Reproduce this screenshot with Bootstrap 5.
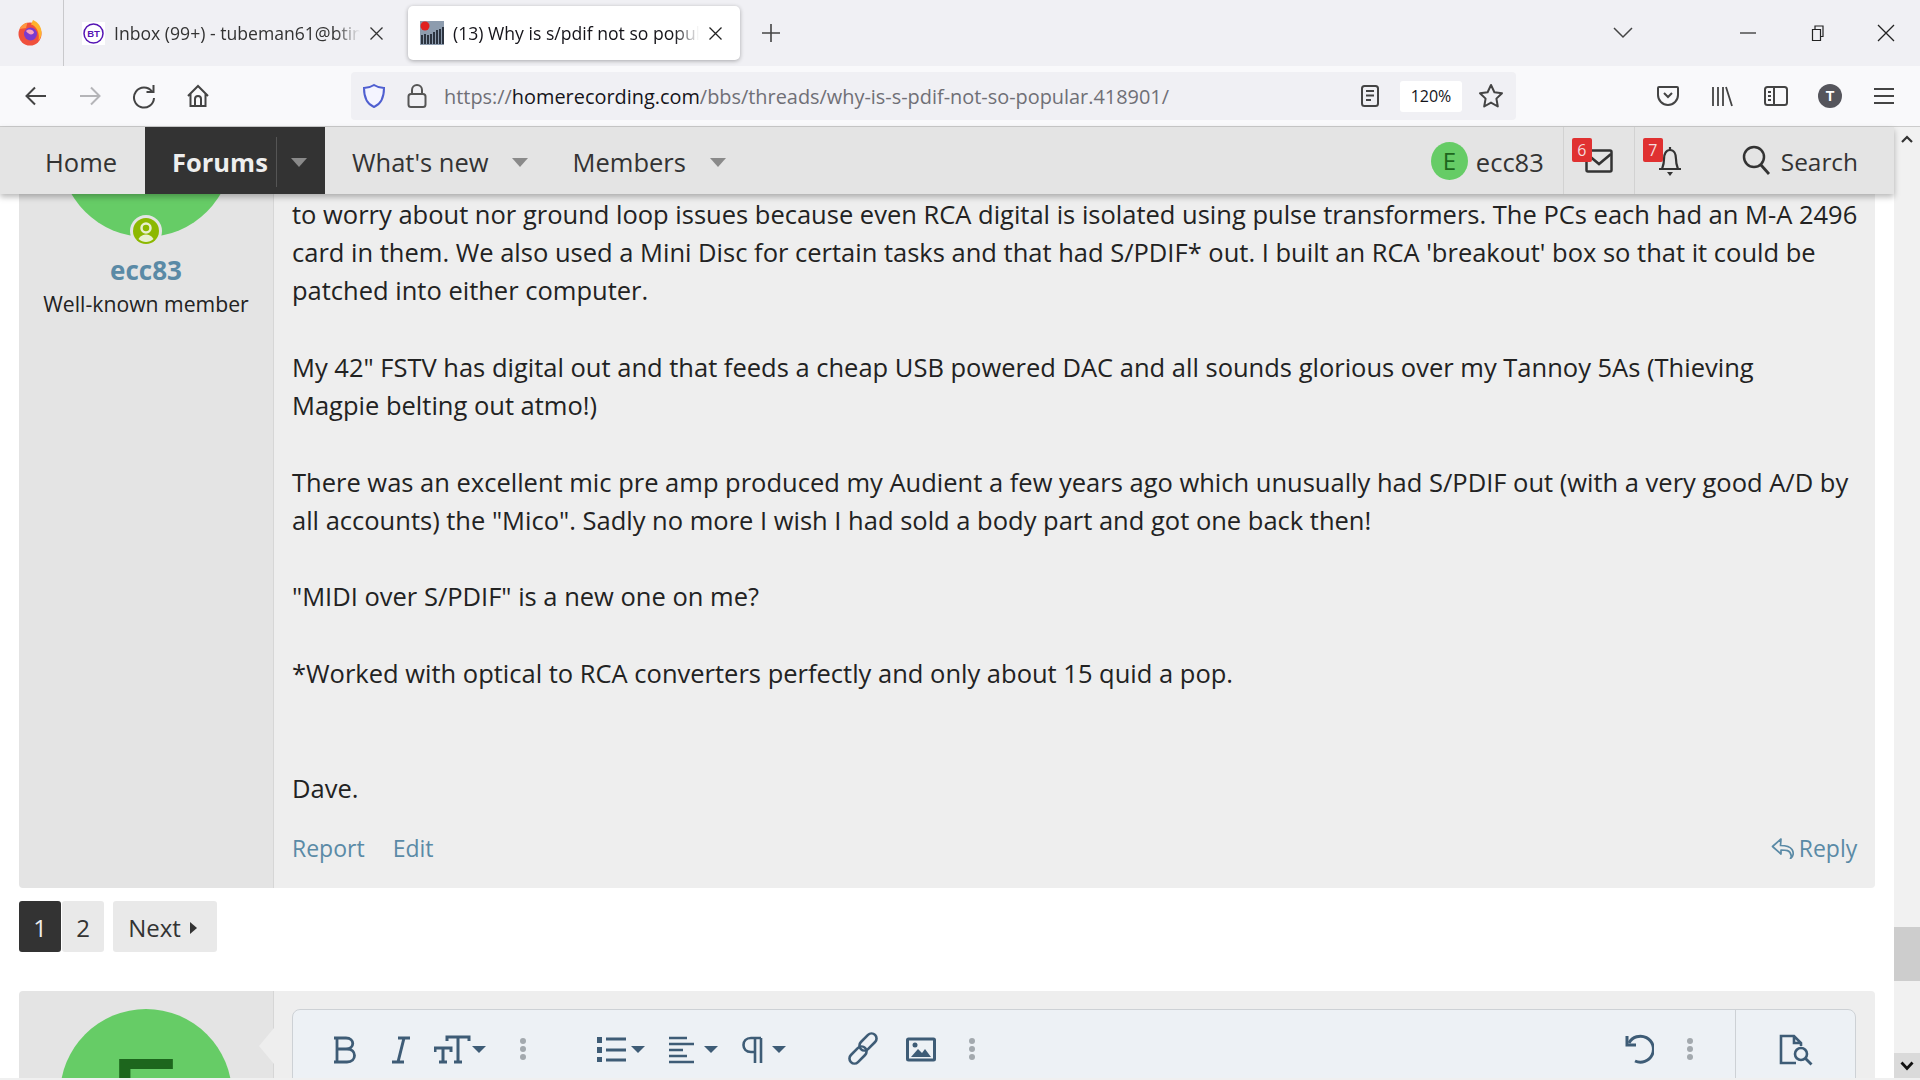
<!DOCTYPE html>
<html lang="en">
<head>
    <meta charset="UTF-8">
    <title>(13) Why is s/pdif not so popular</title>
    <link rel="stylesheet" href="https://cdn.jsdelivr.net/npm/bootstrap@5.3.0/dist/css/bootstrap.min.css">
    <style>
        html, body { height: 1080px; overflow: hidden; }
        body { font-family: "Open Sans", "Noto Sans", sans-serif; background: #fff; color: #222; }

        /* Browser chrome */
        .tabstrip { height: 66px; background: #f0f0f4; }
        .fx-cell { width: 64px; height: 66px; border-right: 1px solid #c9c9cc; padding-right: 4px; }
        .tabitem { width: 332px; height: 54px; margin-top: 6px; padding: 0 12px 0 18px; font-size: 17.6px; color: #333; gap: 9px; }
        .tabitem.tab-on { margin-left: 12px; background: #fff; border-radius: 5px; box-shadow: 0 1px 4px rgba(0,0,0,.3); padding-left: 12px; padding-right: 17px; color: #15141a; }
        .tabtitle { flex: 1; white-space: nowrap; overflow: hidden; -webkit-mask-image: linear-gradient(90deg, #000 90%, transparent); mask-image: linear-gradient(90deg, #000 90%, transparent); }
        .toolrow { height: 61px; background: #f9f9fb; border-bottom: 1px solid #ccc; padding-left: 9px; }
        .tb-btn { width: 54px; height: 48px; flex: none; }
        .urlbar { width: 1165px; height: 48px; margin-left: 126px; background: #f0f0f4; border-radius: 4px; }
        .urltext { font-size: 19.9px; color: #6f6f76; white-space: nowrap; margin-left: 17px; width: 909px; padding-top: 2px; }
        .urltext b { font-weight: 400; color: #15141a; }
        .zoombox { width: 62px; height: 31px; background: #fff; border-radius: 3px; font-size: 16px; color: #15141a; margin-left: 21px; }

        /* Forum nav */
        .mainwrap { height: 951px; }
        .pagecol { width: 1894px; }
        .forumnav { height: 67px; background: #e4e4e4; box-shadow: 0 3px 6px rgba(0,0,0,.28); position: relative; z-index: 2; font-size: 25.5px; color: #333; }
        .navlink { height: 67px; padding-left: 27px; padding-top: 3px; }
        .navlink.nav-on { background: #333; color: #eee; font-weight: 700; width: 180px; padding-top: 3px; }
        .caret-dn { width: 0; height: 0; border: 8px solid transparent; border-top: 9px solid #8a8a8a; border-bottom: 0; }
        .navsep { width: 1px; height: 67px; background: #d2d2d2; }
        .nav-on .navsep { height: 50px; background: #555; margin-left: 8px; margin-right: 14px; }
        .useravatar { width: 37px; height: 38px; border-radius: 50%; background: #66cc66; color: #1d661d; font-size: 24px; }
        .iconcell { width: 70px; height: 67px; position: relative; }
        .redcount { position: absolute; top: 11px; left: 8px; width: 20px; height: 24px; background: #e03131; color: #f5dddd; font-size: 16px; line-height: 24px; text-align: center; border-radius: 2px; }
        .searchlabel { font-size: 24.4px; margin-left: 10px; padding-top: 4px; }

        /* Posts */
        .pagebody { padding: 0 19px; height: 884px; overflow: hidden; }
        .postbox { display: flex; border-radius: 4px; overflow: hidden; }
        .usercell { width: 255px; flex: none; background: #e4e4e4; border-right: 1px solid #d6d6d6; position: relative; text-align: center; overflow: hidden; }
        .msgcell { flex: 1; background: #eee; position: relative; padding: 1px 19px 0 18px; }
        .avatarbig { width: 172px; height: 172px; border-radius: 50%; background: #66cc66; color: #1d661d; margin: 0 auto; font-size: 135px; line-height: 190px; padding-right: 5px; }
        .statusdot { position: absolute; left: 111px; top: 21px; width: 32px; height: 32px; border-radius: 50%; background: #e4e4e4; }
        .uname { font-size: 26px; font-weight: 700; color: #5a8aa6; line-height: 32px; margin-top: 17px; }
        .utitle { font-size: 21.2px; line-height: 36px; color: #222; }
        .posttext { font-size: 25.5px; line-height: 38.24px; white-space: nowrap; color: #222; }
        .postlinks { height: 38px; margin-top: 22px; font-size: 23px; color: #5a8aa6; }
        .pagerow { margin: 13px 0 39px; height: 51px; font-size: 24px; }
        .pgnum { width: 42px; background: #e9e9e9; border-radius: 3px; margin-right: 1px; color: #333; padding-top: 2px; }
        .pgnum.pg-on { background: #333; color: #eee; }
        .pgnext { width: 104px; margin-left: 8px; padding: 2px 5px 0 0; background: #e9e9e9; border-radius: 3px; color: #333; gap: 9px; }
        .arrow-r { width: 0; height: 0; border: 6px solid transparent; border-left: 7px solid #333; border-right: 0; }
        .editorbox { margin-top: 18px; height: 100px; background: #edf1f5; border: 1px solid #cdd1d5; border-radius: 8px 8px 0 0; }
        .edbar { height: 78px; position: relative; }
        .edbtn { position: absolute; top: 0; height: 78px; }
        .edsep { position: absolute; top: 0; left: 1442px; width: 1px; height: 100px; background: #cdd1d5; }
        .tail-left { position: absolute; left: -15px; top: 37px; width: 0; height: 0; border: 18px solid transparent; border-right: 15px solid #eee; border-left: 0; }

        /* Scrollbar */
        .scrolltrack { width: 26px; background: #f1f1f1; position: relative; }
        .scrollthumb { position: absolute; top: 800px; left: 0; width: 26px; height: 54px; background: #cdcdcd; }
        .scrollend { position: absolute; bottom: 0; left: 0; width: 26px; height: 25px; background: #dadada; }
        .bottomstrip { height: 2px; background: #f0f0f0; }
    </style>
</head>
<body>

    <!-- Tab strip -->
    <div class="tabstrip d-flex">
        <div class="fx-cell d-flex align-items-center justify-content-center">
            <svg width="26" height="28" viewBox="0 0 26 28"><circle cx="13" cy="15" r="11.500" fill="#f0503c"/><path d="M16 1c5 2 9 7 8.500 13.500-.3 3-1.500 5.500-3 7C23 15 20 7 14 5.500z" fill="#ffb32c"/><path d="M2.500 10c1.500-3.500 4.500-6 8-6.500L9 9z" fill="#ff9640"/><circle cx="13.500" cy="15" r="6.500" fill="#7a3bd0"/><path d="M9 12c3-2.500 7-1.500 8 1.500-1 2.500-5 3-8-1.500z" fill="#f9a0c0"/></svg>
        </div>
        <div class="tabitem d-flex align-items-center">
            <svg width="23" height="23" viewBox="0 0 23 23"><rect width="23" height="23" fill="#fff"/><circle cx="11.500" cy="11.500" r="9.500" fill="none" stroke="#5514b4" stroke-width="1.500"/><text x="11.500" y="15" font-size="9.500" font-weight="700" text-anchor="middle" fill="#5514b4" font-family="Liberation Sans">BT</text></svg>
            <span class="tabtitle">Inbox (99+) - tubeman61@btinternet.com</span>
            <svg width="15" height="15" viewBox="0 0 15 15"><path d="M1.500 1.500l12 12M13.500 1.500l-12 12" stroke="#333" stroke-width="1.300"/></svg>
        </div>
        <div class="tabitem tab-on d-flex align-items-center">
            <svg width="24" height="24" viewBox="0 0 24 24"><rect width="24" height="24" fill="#8d9cae"/><path d="M2 23v-9M5 23v-10M8 23v-9M11 23v-10M14 23v-12M17 23v-14M20 23v-15M23 23v-17" stroke="#2c3440" stroke-width="2"/><circle cx="5" cy="5" r="4.500" fill="#e02020"/></svg>
            <span class="tabtitle">(13) Why is s/pdif not so popular</span>
            <svg width="15" height="15" viewBox="0 0 15 15"><path d="M1.500 1.500l12 12M13.500 1.500l-12 12" stroke="#222" stroke-width="1.300"/></svg>
        </div>
        <div class="d-flex align-items-center justify-content-center" style="width:62px">
            <svg width="20" height="20" viewBox="0 0 20 20"><path d="M10 1v18M1 10h18" stroke="#444" stroke-width="1.600"/></svg>
        </div>
        <div class="flex-grow-1 d-flex align-items-center">
            <svg class="ms-auto" width="20" height="12" viewBox="0 0 20 12"><path d="M1 1l9 9 9-9" fill="none" stroke="#444" stroke-width="1.500"/></svg>
            <svg style="margin-left:107px" width="16" height="2" viewBox="0 0 16 2"><path d="M0 1h16" stroke="#333" stroke-width="1.300"/></svg>
            <svg style="margin-left:53px" width="16" height="16" viewBox="0 0 16 16"><path d="M3.500 4.500h8v11h-8zM6 4.500V1h8v10.500h-2.500" fill="none" stroke="#222" stroke-width="1.200"/></svg>
            <svg style="margin-left:52px;margin-right:25px" width="18" height="18" viewBox="0 0 18 18"><path d="M1 1l16 16M17 1L1 17" stroke="#222" stroke-width="1.300"/></svg>
        </div>
    </div>

    <!-- Toolbar -->
    <div class="toolrow d-flex align-items-center">
        <div class="tb-btn d-flex align-items-center justify-content-center"><svg width="24" height="24" viewBox="0 0 24 24"><path d="M22 12H3M11 3.500L2.500 12l8.500 8.500" fill="none" stroke="#444" stroke-width="2"/></svg></div>
        <div class="tb-btn d-flex align-items-center justify-content-center"><svg width="24" height="24" viewBox="0 0 24 24"><path d="M2 12h19M13 3.500l8.500 8.500-8.500 8.500" fill="none" stroke="#b5b5b8" stroke-width="2"/></svg></div>
        <div class="tb-btn d-flex align-items-center justify-content-center"><svg width="24" height="26" viewBox="0 0 24 26"><path d="M20 8.500A10 10 0 1 0 22 15M21.500 2v7h-7" fill="none" stroke="#444" stroke-width="2"/></svg></div>
        <div class="tb-btn d-flex align-items-center justify-content-center"><svg width="24" height="24" viewBox="0 0 24 24"><path d="M2 12L12 2l10 10M4.500 10v12h15V10M9 22v-7a3 3 0 0 1 6 0v7" fill="none" stroke="#444" stroke-width="2"/></svg></div>
        <div class="urlbar d-flex align-items-center">
            <svg style="margin-left:11px" width="24" height="26" viewBox="0 0 24 26"><path d="M12 2c3 2 6 3 10 3 0 9-3 16-10 19C5 21 2 14 2 5c4 0 7-1 10-3z" fill="#f4f4ff" stroke="#4f5fd0" stroke-width="2"/></svg>
            <svg style="margin-left:21px" width="20" height="26" viewBox="0 0 20 26"><path d="M5 11V7a5 5 0 0 1 10 0v4" fill="none" stroke="#555" stroke-width="2"/><rect x="1.500" y="11" width="17" height="13" rx="2.500" fill="none" stroke="#555" stroke-width="2"/></svg>
            <div class="urltext">https://<b>homerecording.com</b>/bbs/threads/why-is-s-pdif-not-so-popular.418901/</div>
            <svg class="ms-2" width="18" height="22" viewBox="0 0 18 22"><rect x="1" y="1" width="16" height="20" rx="2.500" fill="none" stroke="#444" stroke-width="2"/><path d="M5 6h8M5 10.500h8M5 15h5" stroke="#444" stroke-width="2"/></svg>
            <div class="zoombox d-flex align-items-center justify-content-center">120%</div>
            <svg class="ms-3" width="26" height="26" viewBox="0 0 26 26"><path d="M13 2l3.400 7.200 7.600 1-5.600 5.400 1.400 7.900L13 19.600l-6.800 3.900 1.400-7.900L2 10.200l7.600-1z" fill="none" stroke="#444" stroke-width="2" stroke-linejoin="round"/></svg>
        </div>
        <div class="tb-btn d-flex align-items-center justify-content-center" style="margin-left:125px"><svg width="22" height="22" viewBox="0 0 22 22"><path d="M2 2h18a1 1 0 0 1 1 1v7a10 10 0 0 1-20 0V3a1 1 0 0 1 1-1z" fill="none" stroke="#444" stroke-width="2"/><path d="M7 8l4 4 4-4" fill="none" stroke="#444" stroke-width="2"/></svg></div>
        <div class="tb-btn d-flex align-items-center justify-content-center"><svg width="22" height="24" viewBox="0 0 22 24"><path d="M2 3v19M7 3v19M12 3v19M15 3l6 19" stroke="#444" stroke-width="1.800"/></svg></div>
        <div class="tb-btn d-flex align-items-center justify-content-center"><svg width="24" height="20" viewBox="0 0 24 20"><rect x="1" y="1" width="22" height="18" rx="2.500" fill="none" stroke="#444" stroke-width="2"/><path d="M10 1v18M4 6h3M4 10h3M4 14h3" stroke="#444" stroke-width="2"/></svg></div>
        <div class="tb-btn d-flex align-items-center justify-content-center"><svg width="24" height="24" viewBox="0 0 24 24"><circle cx="12" cy="12" r="12" fill="#55555c"/><text x="12" y="17" font-size="14" font-weight="700" text-anchor="middle" fill="#fff" font-family="Liberation Sans">T</text></svg></div>
        <div class="tb-btn d-flex align-items-center justify-content-center"><svg width="20" height="18" viewBox="0 0 20 18"><path d="M0 2h20M0 9h20M0 16h20" stroke="#444" stroke-width="2"/></svg></div>
    </div>

    <div class="mainwrap d-flex">
        <div class="pagecol">
            <!-- Forum nav -->
            <nav class="forumnav d-flex align-items-center">
                <div class="navlink d-flex align-items-center" style="padding-left:45px;width:145px">Home</div>
                <div class="navlink nav-on d-flex align-items-center">
                    <span>Forums</span>
                    <span class="navsep"></span>
                    <span class="caret-dn"></span>
                </div>
                <div class="navlink d-flex align-items-center"><span>What's new</span><span class="caret-dn" style="margin-left:23px"></span></div>
                <div class="navlink d-flex align-items-center" style="padding-left:45px"><span>Members</span><span class="caret-dn" style="margin-left:24px"></span></div>

                <div class="ms-auto d-flex align-items-center">
                    <div class="useravatar d-flex align-items-center justify-content-center">E</div>
                    <span class="ms-2 pt-1" style="margin-right:19px">ecc83</span>
                    <span class="navsep"></span>
                    <div class="iconcell d-flex align-items-center justify-content-center">
                        <span class="redcount">6</span>
                        <svg width="28" height="24" viewBox="0 0 28 24"><rect x="1.500" y="1.500" width="25" height="21" rx="1.500" fill="none" stroke="#333" stroke-width="2.500"/><path d="M2 5l12 10 12-10" fill="none" stroke="#333" stroke-width="2.500"/></svg>
                    </div>
                    <span class="navsep"></span>
                    <div class="iconcell d-flex align-items-center justify-content-center">
                        <span class="redcount">7</span>
                        <svg width="26" height="32" viewBox="0 0 26 32"><path d="M13 2v3M5 24c1-3 2-5 2-10s2-9 6-9 6 4 6 9 1 7 2 10zM2 24h22" fill="none" stroke="#333" stroke-width="2.200"/><path d="M10 27h6l-3 4z" fill="#333"/></svg>
                    </div>
                    <div class="d-flex align-items-center" style="margin-left:37px;margin-right:36px">
                        <svg width="29" height="30" viewBox="0 0 29 30"><circle cx="12" cy="12" r="10" fill="none" stroke="#333" stroke-width="2.500"/><path d="M19 20l8 9" stroke="#333" stroke-width="2.800"/></svg>
                        <span class="searchlabel">Search</span>
                    </div>
                </div>
            </nav>

            <div class="pagebody">
                <!-- Post -->
                <div class="postbox" style="height:694px;border-radius:0 0 4px 4px">
                    <div class="usercell">
                        <div class="avatarbig" style="margin-top:-129px"></div>
                        <div class="statusdot d-flex align-items-center justify-content-center">
                            <svg width="26" height="26" viewBox="0 0 26 26"><circle cx="13" cy="13" r="13" fill="#8cb800"/><circle cx="13" cy="10" r="4.500" fill="none" stroke="#e8f0d0" stroke-width="2.500"/><path d="M5.500 21c2-3.500 5-4.500 7.500-4.500s5.500 1 7.500 4.500c-2 2-5 3-7.500 3s-5.500-1-7.500-3z" fill="#e8f0d0"/></svg>
                        </div>
                        <div class="uname">ecc83</div>
                        <div class="utitle">Well-known member</div>
                    </div>
                    <div class="msgcell">
                        <div class="posttext">to worry about nor ground loop issues because even RCA digital is isolated using pulse transformers. The PCs each had an M-A 2496<br>card in them. We also used a Mini Disc for certain tasks and that had S/PDIF* out. I built an RCA 'breakout' box so that it could be<br>patched into either computer.<br><br>My 42" FSTV has digital out and that feeds a cheap USB powered DAC and all sounds glorious over my Tannoy 5As (Thieving<br>Magpie belting out atmo!)<br><br>There was an excellent mic pre amp produced my Audient a few years ago which unusually had S/PDIF out (with a very good A/D by<br>all accounts) the "Mico". Sadly no more I wish I had sold a body part and got one back then!<br><br>"MIDI over S/PDIF" is a new one on me?<br><br>*Worked with optical to RCA converters perfectly and only about 15 quid a pop.<br><br><br>Dave.</div>
                        <div class="postlinks d-flex align-items-center">
                            <span>Report</span>
                            <span style="margin-left:28px">Edit</span>
                            <span class="ms-auto d-flex align-items-center">
                                <svg class="me-1" width="24" height="22" viewBox="0 0 24 22"><path d="M10 2L1.500 9.500 10 17v-4c5 0 9 0 10 5 .5 1 .5 2-.5 3.500 3-2 3.500-6 1.500-9-2-3-6-4-11.500-4z" fill="none" stroke="#5a8aa6" stroke-width="1.700" stroke-linejoin="round"/></svg>
                                Reply
                            </span>
                        </div>
                    </div>
                </div>

                <!-- Pager -->
                <div class="pagerow d-flex">
                    <div class="pgnum pg-on d-flex align-items-center justify-content-center">1</div>
                    <div class="pgnum d-flex align-items-center justify-content-center">2</div>
                    <div class="pgnext d-flex align-items-center justify-content-center">Next <span class="arrow-r"></span></div>
                </div>

                <!-- Quick reply -->
                <div class="postbox" style="height:200px;border-radius:4px 4px 0 0">
                    <div class="usercell">
                        <div class="avatarbig" style="margin-top:18px">E</div>
                    </div>
                    <div class="msgcell" style="padding-top:0">
                        <span class="tail-left"></span>
                        <div class="editorbox">
                            <div class="edbar">
                                <!-- B -->
                                <svg class="edbtn" style="left:38px" width="26" height="78" viewBox="0 0 26 78"><path d="M3 28h4M3 52h4M6 28v24M6 28h9c9 0 9 11 0 11H6M6 39h10c10 0 10 13 0 13H6" fill="none" stroke="#3e5c76" stroke-width="2.800"/></svg>
                                <!-- I -->
                                <svg class="edbtn" style="left:97px" width="22" height="78" viewBox="0 0 22 78"><path d="M8 28h12M2 52h12M14 28L8 52" fill="none" stroke="#3e5c76" stroke-width="3"/></svg>
                                <!-- text size -->
                                <svg class="edbtn" style="left:141px" width="54" height="78" viewBox="0 0 54 78"><path d="M1 42v-4h16v4M9 38v14M5 52h8M13 31v-4h22v4M24 27v25M20 52h8" fill="none" stroke="#3e5c76" stroke-width="3"/><path d="M38 36h14l-7 7z" fill="#3e5c76"/></svg>
                                <!-- dots -->
                                <svg class="edbtn" style="left:226px" width="8" height="78" viewBox="0 0 8 78"><circle cx="4" cy="31" r="3" fill="#a3a9ae"/><circle cx="4" cy="39" r="3" fill="#a3a9ae"/><circle cx="4" cy="47" r="3" fill="#a3a9ae"/></svg>
                                <!-- list -->
                                <svg class="edbtn" style="left:303px" width="50" height="78" viewBox="0 0 50 78"><path d="M1 27h5v6H1zM1 37h5v6H1zM1 47h5v5H1z" fill="#3e5c76"/><path d="M10 29h20M10 40h20M10 50h20" stroke="#3e5c76" stroke-width="2.800"/><path d="M35 36h14l-7 7z" fill="#3e5c76"/></svg>
                                <!-- align -->
                                <svg class="edbtn" style="left:376px" width="50" height="78" viewBox="0 0 50 78"><path d="M0 28h18M0 34h25M0 40h14M0 46h18M0 52h25" stroke="#3e5c76" stroke-width="2.400"/><path d="M35 36h14l-7 7z" fill="#3e5c76"/></svg>
                                <!-- paragraph -->
                                <svg class="edbtn" style="left:448px" width="46" height="78" viewBox="0 0 46 78"><path d="M20 28H10c-10 0-10 14 0 14h4M14 28v25M20 28v25" fill="none" stroke="#3e5c76" stroke-width="2.600"/><path d="M31 36h14l-7 7z" fill="#3e5c76"/></svg>
                                <!-- link -->
                                <svg class="edbtn" style="left:555px" width="30" height="78" viewBox="0 0 30 78"><rect x="-5" y="-10" width="10" height="20" rx="5" transform="translate(20 32) rotate(45)" fill="none" stroke="#3e5c76" stroke-width="2.600"/><rect x="-5" y="-10" width="10" height="20" rx="5" transform="translate(10 45) rotate(45)" fill="none" stroke="#3e5c76" stroke-width="2.600"/></svg>
                                <!-- image -->
                                <svg class="edbtn" style="left:613px" width="30" height="78" viewBox="0 0 30 78"><rect x="1.500" y="29" width="27" height="21" rx="1" fill="none" stroke="#3e5c76" stroke-width="3"/><path d="M5 47l7-8 4 4 3-4 6 8z" fill="#3e5c76"/><circle cx="9" cy="35" r="2.500" fill="#3e5c76"/></svg>
                                <!-- dots -->
                                <svg class="edbtn" style="left:675px" width="8" height="78" viewBox="0 0 8 78"><circle cx="4" cy="31" r="3" fill="#a3a9ae"/><circle cx="4" cy="39" r="3" fill="#a3a9ae"/><circle cx="4" cy="47" r="3" fill="#a3a9ae"/></svg>
                                <!-- undo -->
                                <svg class="edbtn" style="left:1331px" width="30" height="78" viewBox="0 0 30 78"><path d="M5 33a13 13 0 1 1 6 18" fill="none" stroke="#3e5c76" stroke-width="3"/><path d="M3 26v9h9" fill="none" stroke="#3e5c76" stroke-width="3"/></svg>
                                <!-- dots -->
                                <svg class="edbtn" style="left:1393px" width="8" height="78" viewBox="0 0 8 78"><circle cx="4" cy="31" r="3" fill="#a3a9ae"/><circle cx="4" cy="39" r="3" fill="#a3a9ae"/><circle cx="4" cy="47" r="3" fill="#a3a9ae"/></svg>
                                <span class="edsep"></span>
                                <!-- preview -->
                                <svg class="edbtn" style="left:1486px" width="34" height="78" viewBox="0 0 34 78"><path d="M17 53H2V26h13l7 7v3M15 26v7h7" fill="none" stroke="#3e5c76" stroke-width="2.600"/><circle cx="22" cy="44" r="6" fill="none" stroke="#3e5c76" stroke-width="2.600"/><path d="M26.500 48.500l6 6" stroke="#3e5c76" stroke-width="2.800"/></svg>
                            </div>
                        </div>
                    </div>
                </div>
            </div>
        </div>

        <!-- Scrollbar -->
        <div class="scrolltrack">
            <svg class="position-absolute" style="top:8px;left:7px" width="12" height="8" viewBox="0 0 12 8"><path d="M1 7l5-5 5 5" fill="none" stroke="#333" stroke-width="2.200"/></svg>
            <div class="scrollthumb"></div>
            <div class="scrollend d-flex align-items-center justify-content-center"><svg width="14" height="10" viewBox="0 0 14 10"><path d="M1.500 1.500L7 7.500l5.500-6" fill="none" stroke="#111" stroke-width="2.800"/></svg></div>
        </div>
    </div>
    <div class="bottomstrip"></div>

    <script src="https://cdn.jsdelivr.net/npm/bootstrap@5.3.0/dist/js/bootstrap.bundle.min.js"></script>
</body>
</html>
